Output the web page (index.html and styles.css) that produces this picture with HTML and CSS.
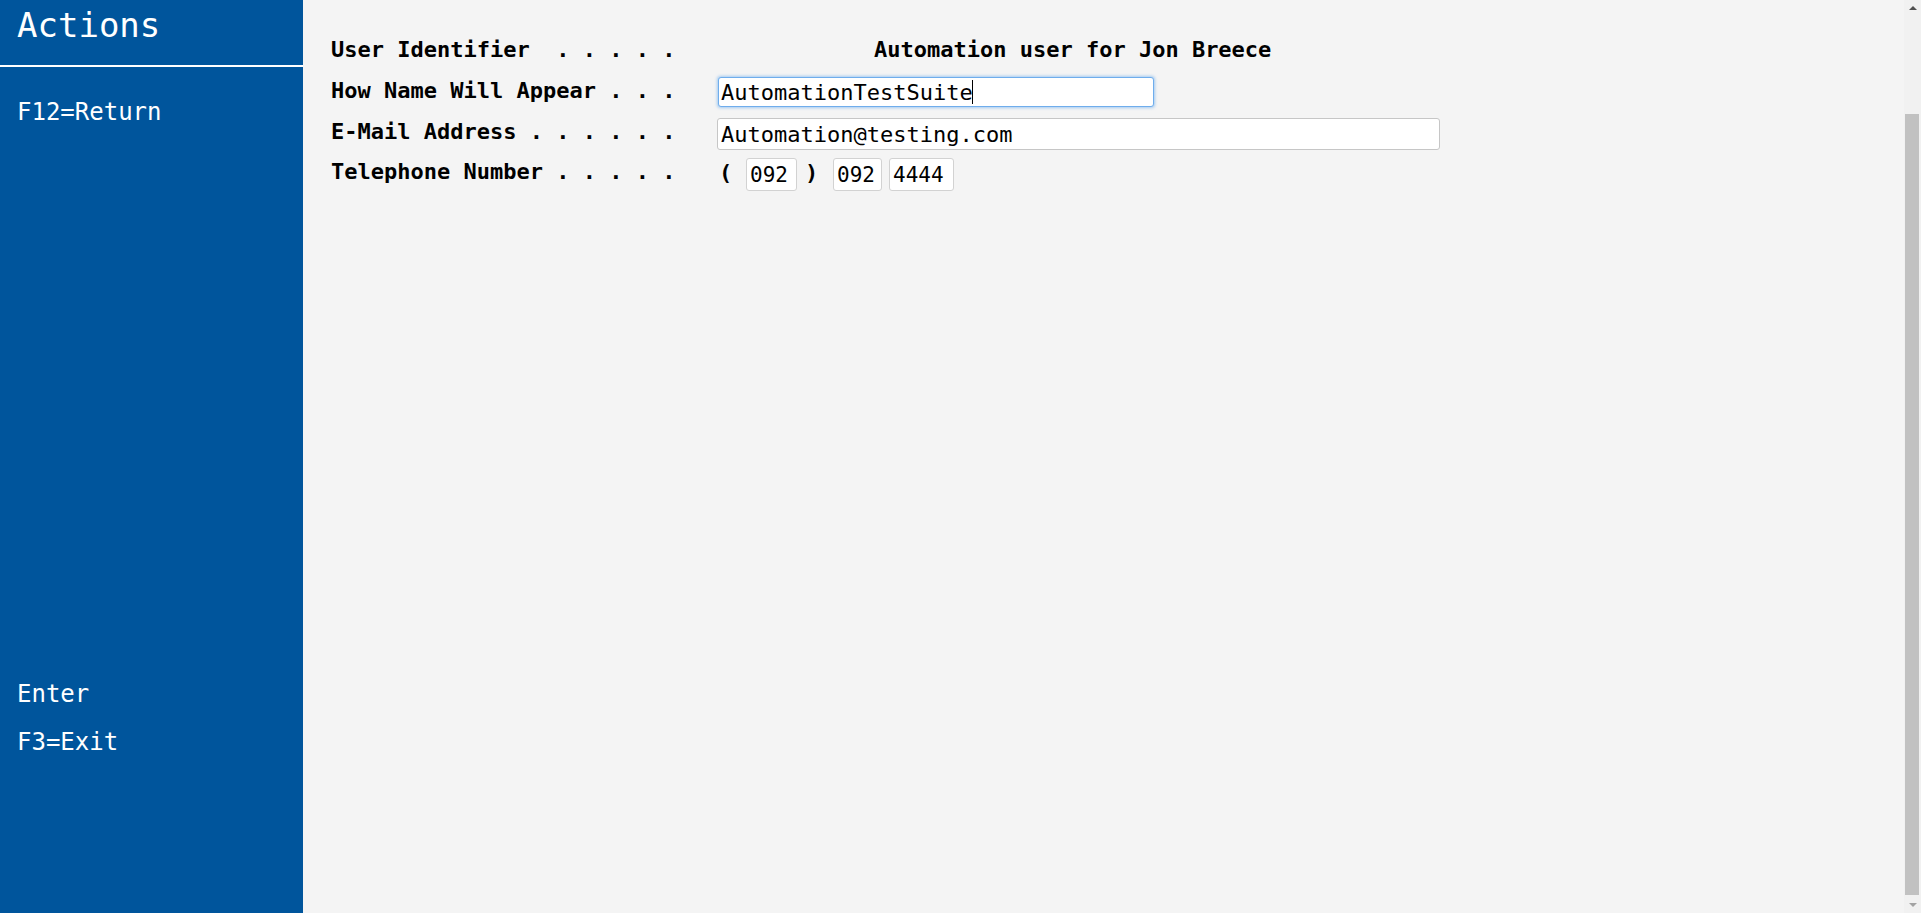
FILE: index.html
```html
<!DOCTYPE html>
<html lang="en">
<head>
<meta charset="utf-8">
<title>Actions</title>
<link rel="stylesheet" href="styles.css">
</head>
<body>
<aside class="sidebar">
  <div class="side-title">Actions</div>
  <div class="side-top">
    <div class="side-item">F12=Return</div>
  </div>
  <div class="side-bottom">
    <div class="side-item">Enter</div>
    <div class="side-item">F3=Exit</div>
  </div>
</aside>
<main class="main">
  <div class="row row-1">
    <span class="label">User Identifier  . . . . .</span>
    <span class="value-text">Automation user for Jon Breece</span>
  </div>
  <div class="row row-2">
    <span class="label">How Name Will Appear . . .</span>
    <span class="field-wrap">
      <input class="field field-focus" type="text" value="AutomationTestSuite">
      <span class="caret"></span>
    </span>
  </div>
  <div class="row row-3">
    <span class="label">E-Mail Address . . . . . .</span>
    <input class="field field-email" type="text" value="Automation@testing.com">
  </div>
  <div class="row row-4">
    <span class="label">Telephone Number . . . . .</span>
    <span class="phone">
      <span class="paren">(</span>
      <input class="pbox pbox-area" type="text" value="092">
      <span class="paren paren-close">)</span>
      <input class="pbox pbox-pre" type="text" value="092">
      <input class="pbox pbox-num" type="text" value="4444">
    </span>
  </div>
</main>
<div class="scrollbar">
  <div class="sb-btn"><span class="arrow-up"></span></div>
  <div class="sb-track"><div class="sb-thumb"></div></div>
  <div class="sb-btn"><span class="arrow-down"></span></div>
</div>
</body>
</html>
```
FILE: styles.css
```css
html, body {
  margin: 0;
  padding: 0;
}
body {
  display: flex;
  height: 913px;
  overflow: hidden;
  font-family: "DejaVu Sans Mono", "Liberation Mono", monospace;
  background: #f4f4f4;
}
.sidebar {
  width: 303px;
  flex: none;
  background: #00559c;
  color: #ffffff;
  display: flex;
  flex-direction: column;
}
.side-title {
  font-size: 34px;
  line-height: 40px;
  padding: 5px 0 0 17px;
  height: 60px;
  border-bottom: 2px solid #ffffff;
}
.side-top {
  padding-top: 21px;
}
.side-item {
  font-size: 24px;
  line-height: 48px;
  padding-left: 17px;
}
.side-bottom {
  margin-top: auto;
  padding-bottom: 147px;
}
.main {
  flex: 1;
  padding: 30px 0 0 28px;
  color: #000000;
}
.row {
  display: flex;
  align-items: center;
  font-size: 22px;
}
.row-1 { height: 40px; }
.row-2 { height: 41px; }
.row-3 { height: 41px; }
.row-4 { height: 40px; }
.label {
  width: 387px;
  flex: none;
  white-space: pre;
  font-weight: bold;
  line-height: 26px;
}
.value-text {
  font-weight: bold;
  margin-left: 156px;
  line-height: 26px;
  white-space: pre;
}
.field-wrap {
  position: relative;
  display: inline-flex;
  margin-top: 3px;
}
.field {
  font-family: "DejaVu Sans Mono", "Liberation Mono", monospace;
  font-size: 22px;
  color: #000000;
  background: #ffffff;
  box-sizing: border-box;
  margin: 0;
  border-radius: 3px;
  outline: none;
}
.field-focus {
  width: 436px;
  height: 30px;
  padding: 0 2px 0 2px;
  border: 1px solid #6fadec;
  box-shadow: 0 0 3px 1px rgba(120, 180, 240, 0.65);
}
.caret {
  position: absolute;
  left: 254px;
  top: 3px;
  width: 1px;
  height: 24px;
  background: #000000;
}
.field-email {
  width: 723px;
  height: 32px;
  padding: 0 2px 0 3px;
  border: 1px solid #c6c6c6;
  margin-top: 5px;
  margin-left: -1px;
}
.phone {
  display: flex;
  align-items: center;
  margin-top: 5px;
}
.paren {
  font-weight: bold;
  font-size: 22px;
  line-height: 26px;
  margin-top: -4px;
  width: 28px;
  padding-left: 1px;
  box-sizing: border-box;
}
.paren-close {
  width: 36px;
  padding-left: 8px;
}
.pbox {
  font-family: "DejaVu Sans Mono", "Liberation Mono", monospace;
  font-size: 21px;
  color: #000000;
  background: #ffffff;
  box-sizing: border-box;
  height: 33px;
  margin: 0;
  padding: 0 0 0 3px;
  border: 1px solid #d2d2d2;
  border-radius: 3px;
  outline: none;
}
.pbox-area { width: 51px; }
.pbox-pre { width: 49px; margin-right: 7px; }
.pbox-num { width: 65px; }
.scrollbar {
  width: 17px;
  flex: none;
  background: #f1f1f1;
  display: flex;
  flex-direction: column;
}
.sb-btn {
  height: 17px;
  display: flex;
  align-items: center;
  justify-content: center;
}
.arrow-up {
  width: 0;
  height: 0;
  border-left: 4px solid transparent;
  border-right: 4px solid transparent;
  border-bottom: 4px solid #505050;
  margin-bottom: 1px;
}
.arrow-down {
  width: 0;
  height: 0;
  border-left: 4px solid transparent;
  border-right: 4px solid transparent;
  border-top: 4px solid #a3a3a3;
  margin-top: 1px;
}
.sb-track {
  flex: 1;
  display: flex;
  flex-direction: column;
}
.sb-thumb {
  margin: 97px 2px 1px 1px;
  flex: 1;
  background: #c1c1c1;
}
```
